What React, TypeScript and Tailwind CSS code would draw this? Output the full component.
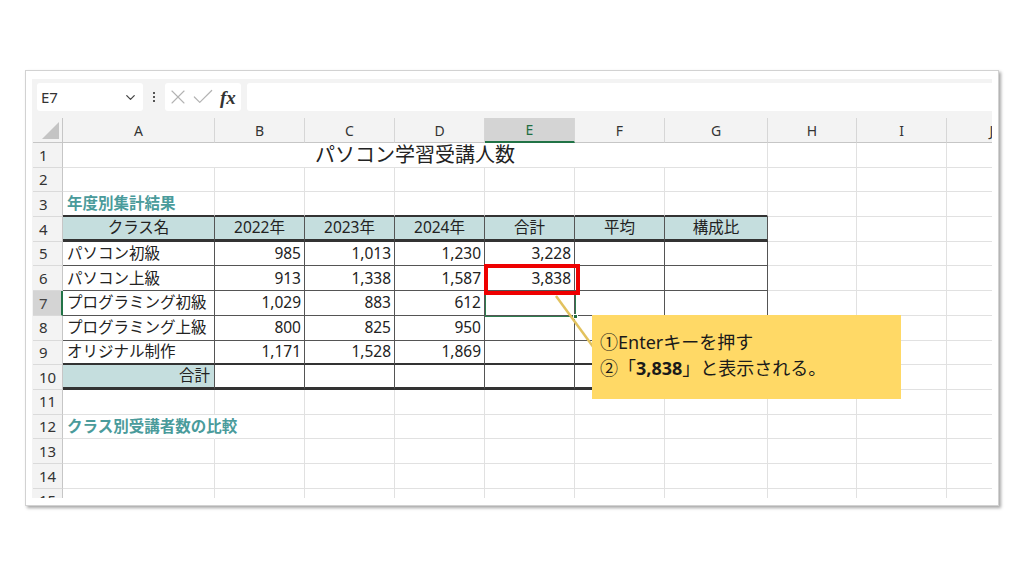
import { ChevronDown, X, Check } from "lucide-react";
import clsx from "clsx";

const colWidths = ["w-[152px]", "w-[90px]", "w-[90px]", "w-[90px]", "w-[90px]", "w-[90px]", "w-[103px]", "w-[89px]", "w-[90px]", "w-[90px]"];
const colNames = ["A", "B", "C", "D", "E", "F", "G", "H", "I", "J"];

const data: Record<number, string[]> = {
  4: ["クラス名", "2022年", "2023年", "2024年", "合計", "平均", "構成比"],
  5: ["パソコン初級", "985", "1,013", "1,230", "3,228"],
  6: ["パソコン上級", "913", "1,338", "1,587", "3,838"],
  7: ["プログラミング初級", "1,029", "883", "612"],
  8: ["プログラミング上級", "800", "825", "950"],
  9: ["オリジナル制作", "1,171", "1,528", "1,869"],
  10: ["合計"],
};

const rows = Array.from({ length: 15 }, (_, i) => i + 1);

function bottomCls(r: number, c: number) {
  if (c <= 6) {
    if (r === 3) return "border-b-2 border-b-[#333]";
    if (r === 4) return "border-b-[3px] border-b-[#333]";
    if (r >= 5 && r <= 8) return "border-b border-b-[#555]";
    if (r === 9) return "border-b-2 border-b-[#333]";
    if (r === 10) return "border-b-[3px] border-b-[#333]";
  }
  return "border-b border-b-[#e1e1e1]";
}

function rightCls(r: number, c: number) {
  if (c <= 6 && r >= 4 && r <= 10) return "border-r border-r-[#555]";
  if (r === 12 && c === 0) return "border-r border-r-transparent";
  return "border-r border-r-[#e1e1e1]";
}

function RowHeader({ r }: { r: number }) {
  const sel = r === 7;
  return (
    <div
      className={clsx(
        "w-[30px] h-full shrink-0 flex items-center pl-[6px] text-[15px] border-b border-b-[#dadada]",
        sel ? "bg-[#d4d4d4] text-[#444] border-r-2 border-r-[#217346]" : "bg-[#f3f3f3] text-[#333] border-r border-r-[#c6c6c6]"
      )}
    >
      {r}
    </div>
  );
}

function GridRow({ r }: { r: number }) {
  if (r === 1) {
    return (
      <div className="flex h-[24.7px]">
        <RowHeader r={r} />
        <div className="w-[705px] h-full shrink-0 flex items-center justify-center text-[20px] text-[#222] border-r border-r-[#e1e1e1] border-b border-b-[#e1e1e1]">
          パソコン学習受講人数
        </div>
        {[7, 8, 9].map((c) => (
          <div key={c} className={clsx(colWidths[c], "h-full shrink-0", rightCls(r, c), bottomCls(r, c))} />
        ))}
      </div>
    );
  }
  const vals = data[r] || [];
  return (
    <div className="flex h-[24.7px]">
      <RowHeader r={r} />
      {colWidths.map((w, c) => {
        const v = vals[c];
        const teal = (r === 4 && c <= 6) || (r === 10 && c === 0);
        const heading = (r === 3 || r === 12) && c === 0;
        return (
          <div
            key={c}
            className={clsx(
              w,
              "h-full shrink-0 flex items-center text-[15.5px] text-[#222] px-[4px] whitespace-nowrap",
              rightCls(r, c),
              bottomCls(r, c),
              teal && "bg-[#c5dede]",
              r === 4 && "justify-center",
              r === 10 && c === 0 && "justify-end",
              r >= 5 && r <= 9 && c > 0 && "justify-end pr-[3px]",
              heading && "relative z-10 overflow-visible"
            )}
          >
            {heading ? (
              <span className="font-bold text-[#4a9b9b]">{r === 3 ? "年度別集計結果" : "クラス別受講者数の比較"}</span>
            ) : (
              v
            )}
          </div>
        );
      })}
    </div>
  );
}

export default function App() {
  return (
    <div className="relative w-[1024px] h-[576px] bg-white overflow-hidden font-['Noto_Sans','Noto_Sans_CJK_JP',sans-serif]">
      <div className="pt-[70px] pl-[25px]">
        <div className="w-[974px] h-[436px] border border-[#d2d2d2] bg-white shadow-[2px_2px_3px_rgba(0,0,0,0.35)] pt-[8px] pl-[6px]">
          <div className="w-[960px] h-[419px] bg-[#f3f3f3] overflow-hidden flex flex-col">
            {/* Formula bar */}
            <div className="h-[39px] shrink-0 flex items-start pt-[4px] pl-[5px]">
              <div className="w-[106px] h-[28px] bg-white rounded-[3px] flex items-center justify-between pl-[4px] pr-[5px] text-[15px] text-[#333]">
                <span>E7</span>
                <ChevronDown size={15} strokeWidth={2} className="text-[#444]" />
              </div>
              <div className="w-[22px] h-[28px] flex flex-col items-center justify-center gap-[2px]">
                <span className="w-[2px] h-[2px] bg-[#555]" />
                <span className="w-[2px] h-[2px] bg-[#555]" />
                <span className="w-[2px] h-[2px] bg-[#555]" />
              </div>
              <div className="w-[76px] h-[28px] bg-white rounded-[3px] flex items-center pl-[1px]">
                <X size={24} strokeWidth={1.1} className="text-[#b3b3b3]" />
                <Check size={26} strokeWidth={1.1} className="text-[#b3b3b3] ml-[0px]" />
                <span className="ml-[4px] font-['Liberation_Serif',serif] italic font-bold text-[19px] text-[#333] leading-none">fx</span>
              </div>
              <div className="flex-1 h-[28px] bg-white rounded-l-[3px] ml-[6px]" />
            </div>

            {/* Grid */}
            <div className="pl-px flex-1 flex flex-col">
              <div className="flex h-[25px] shrink-0">
                <div className="w-[30px] h-full shrink-0 bg-[#f3f3f3] border-r border-r-[#c6c6c6] border-b border-b-[#c6c6c6] flex items-end justify-end pr-[3px] pb-[3px]">
                  <svg width="17" height="17" viewBox="0 0 17 17">
                    <polygon points="17,0 17,17 0,17" fill="#c4c4c4" />
                  </svg>
                </div>
                {colWidths.map((w, c) => (
                  <div
                    key={c}
                    className={clsx(
                      w,
                      "h-full shrink-0 flex items-center justify-center text-[14px] border-r border-r-[#d6d6d6]",
                      c === 4
                        ? "bg-[#d4d4d4] text-[#1f6e43] border-b-2 border-b-[#217346]"
                        : "bg-[#f3f3f3] text-[#333] border-b border-b-[#c6c6c6]"
                    )}
                  >
                    {colNames[c]}
                  </div>
                ))}
              </div>
              <div className="bg-white flex-1">
                {rows.map((r) => (
                  <GridRow key={r} r={r} />
                ))}
              </div>
            </div>
          </div>
        </div>
      </div>

      {/* Selected cell E7 */}
      <div className="absolute left-[485px] top-[291px] w-[91px] h-[26px] border border-[#2e7d4f]" />
      <div className="absolute left-[573px] top-[314px] w-[5px] h-[5px] bg-[#1e6b3f] border border-white" />

      {/* Red highlight on E6 */}
      <div className="absolute left-[484px] top-[264px] w-[96px] h-[31px] border-4 border-[#ee0000]" />

      {/* Callout pointer */}
      <svg className="absolute left-0 top-0" width="1024" height="576">
        <line x1="556" y1="296" x2="594" y2="348" stroke="#e2c25e" strokeWidth="2.5" />
      </svg>

      {/* Callout */}
      <div className="absolute left-[592px] top-[315px] w-[309px] h-[84px] bg-[#ffd966] pt-[14px] pl-[8px] text-[18px] leading-[26px] text-[#1a1a1a]">
        <div>①Enterキーを押す</div>
        <div>
          ②「<span className="font-bold">3,838</span>」と表示される。
        </div>
      </div>
    </div>
  );
}
